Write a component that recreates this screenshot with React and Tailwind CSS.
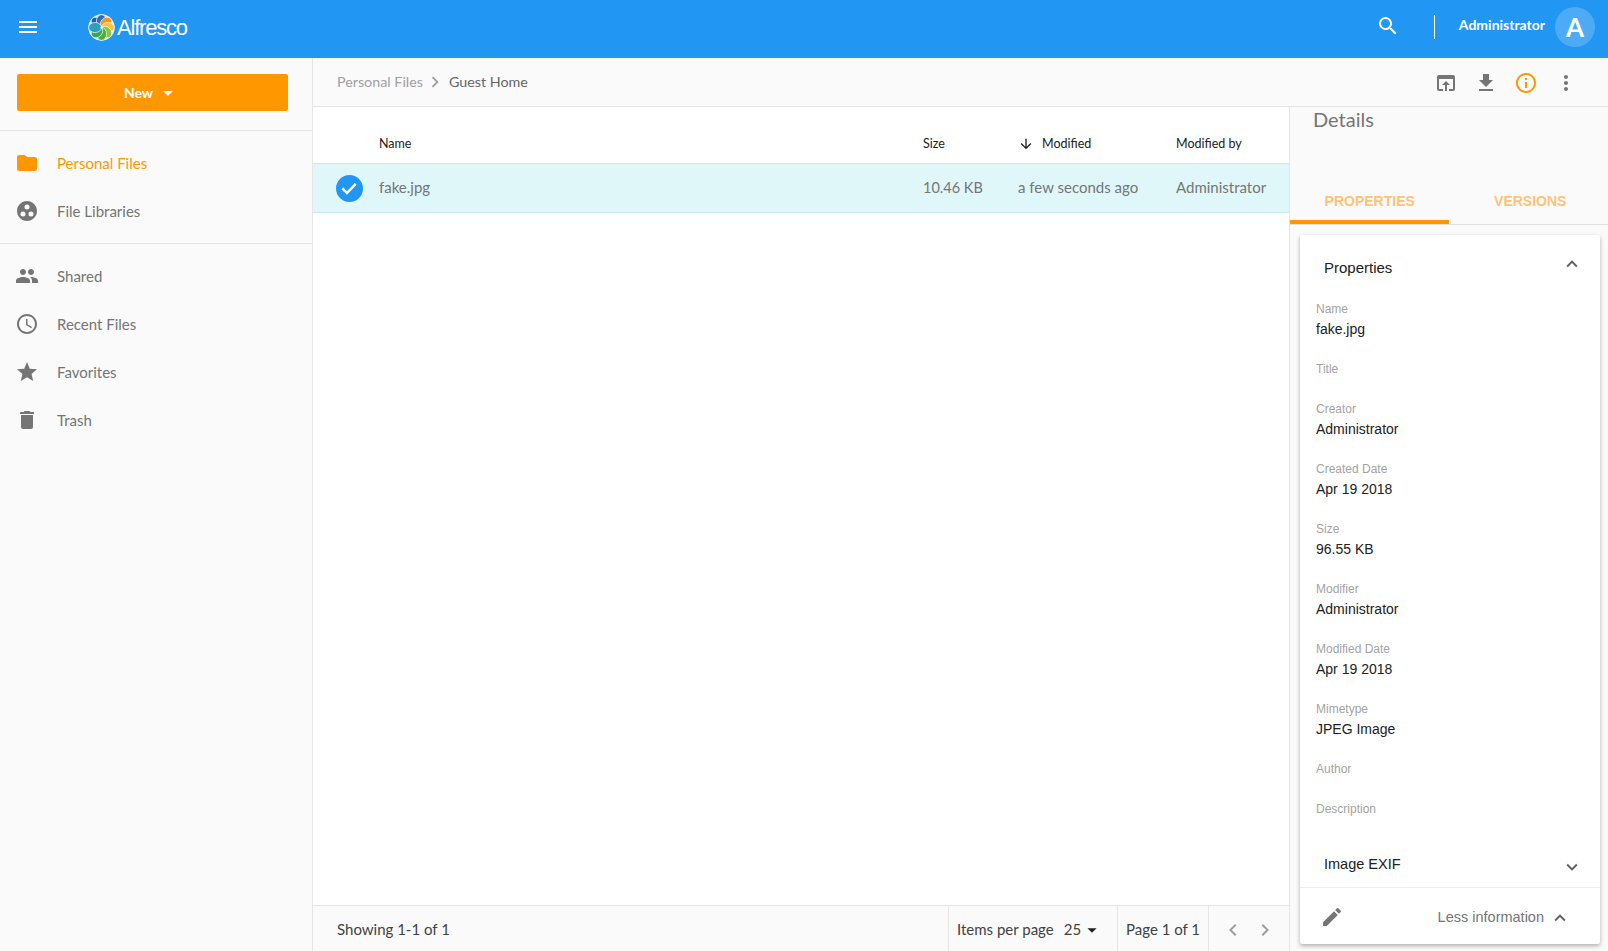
import React from "react";
import {
  MdMenu, MdSearch, MdFolder, MdGroupWork, MdPeople, MdAccessTime, MdStar, MdDelete,
  MdOpenInBrowser, MdFileDownload, MdInfoOutline, MdMoreVert, MdExpandLess, MdExpandMore,
  MdEdit, MdChevronLeft, MdChevronRight, MdArrowDropDown, MdArrowDownward,
} from "react-icons/md";

const topNav = [
  { label: "Personal Files", icon: MdFolder, active: true },
  { label: "File Libraries", icon: MdGroupWork },
];

const bottomNav = [
  { label: "Shared", icon: MdPeople },
  { label: "Recent Files", icon: MdAccessTime },
  { label: "Favorites", icon: MdStar },
  { label: "Trash", icon: MdDelete },
];

const fields = [
  { label: "Name", value: "fake.jpg" },
  { label: "Title" },
  { label: "Creator", value: "Administrator" },
  { label: "Created Date", value: "Apr 19 2018" },
  { label: "Size", value: "96.55 KB" },
  { label: "Modifier", value: "Administrator" },
  { label: "Modified Date", value: "Apr 19 2018" },
  { label: "Mimetype", value: "JPEG Image" },
  { label: "Author" },
  { label: "Description" },
];

const petals = ["#1f5fa8", "#2a6fb8", "#f7941d", "#f9c23c", "#8cc63f", "#4fae32", "#3aa655", "#2a9fc0"];

const Logo = () => (
  <svg width="27" height="27" viewBox="0 0 40 40" className="shrink-0">
    <circle cx="20" cy="20" r="19.5" fill="#ffffff" opacity="0.85" />
    {petals.map((color, i) => (
      <ellipse
        key={i}
        cx="20"
        cy="10.5"
        rx="7.5"
        ry="9.5"
        fill={color}
        stroke="#ffffff"
        strokeWidth="1"
        transform={`rotate(${i * 45 - 45} 20 20)`}
      />
    ))}
    <circle cx="20" cy="20" r="1.5" fill="#ffffff" />
  </svg>
);

const NavItem = ({ item }) => {
  const Icon = item.icon;
  return (
    <div className="flex h-12 items-center gap-[18px] pl-[15px]">
      <Icon size={24} className={item.active ? "text-[#ff9800]" : "text-[#757575]"} />
      <span className={`text-[15px] ${item.active ? "text-[#ff9800]" : "text-[#757575]"}`}>{item.label}</span>
    </div>
  );
};

const Field = ({ field }) => (
  <div className="mb-5 pl-4 font-['Liberation_Sans',sans-serif]">
    <div className="text-[12px] leading-5 text-[#a3a3a3]">{field.label}</div>
    {field.value && <div className="text-[14px] leading-5 text-[#212121]">{field.value}</div>}
  </div>
);

export default function App() {
  return (
    <div className="flex h-screen flex-col overflow-hidden bg-white font-['Lato',sans-serif]">
      {/* Header */}
      <header className="flex h-[58px] shrink-0 items-center bg-[#2196f3] pb-1 text-white">
        <MdMenu size={24} className="ml-4" />
        <div className="ml-[48px] flex items-center gap-[2px]">
          <Logo />
          <span className="font-['Liberation_Sans',sans-serif] text-[22px] tracking-[-1.2px]">Alfresco</span>
        </div>
        <MdSearch size={24} className="ml-auto mb-[2px]" />
        <div className="ml-[34px] h-6 w-px bg-white" />
        <span className="ml-6 mb-[5px] text-[14px] font-bold">Administrator</span>
        <div className="ml-[10px] mr-[13px] flex h-10 w-10 items-center justify-center rounded-full bg-[#4dabf5] text-[26px] font-bold">
          A
        </div>
      </header>

      <div className="flex min-h-0 flex-1">
        {/* Sidebar */}
        <aside className="flex w-[313px] shrink-0 flex-col border-r border-[#e5e5e5] bg-[#fafafa]">
          <div className="border-b border-[#e5e5e5] pb-[19px] pl-[17px] pt-4">
            <button className="flex h-[37px] w-[271px] items-center justify-center rounded-[2px] bg-[#ff9800] pr-[1px] text-[14px] font-bold text-white">
              New
              <MdArrowDropDown size={24} className="ml-[3px]" />
            </button>
          </div>
          <nav className="border-b border-[#e5e5e5] py-2">
            {topNav.map((item) => (
              <NavItem key={item.label} item={item} />
            ))}
          </nav>
          <nav className="py-2">
            {bottomNav.map((item) => (
              <NavItem key={item.label} item={item} />
            ))}
          </nav>
        </aside>

        <div className="flex min-w-0 flex-1 flex-col">
          {/* Breadcrumb and actions */}
          <div className="flex h-[49px] shrink-0 items-center border-b border-[#e5e5e5] bg-[#fafafa] pl-6 pr-[22px]">
            <span className="text-[14.3px] text-[#a0a0a0]">Personal Files</span>
            <MdChevronRight size={22} className="ml-[1px] mr-[3px] text-[#9e9e9e]" />
            <span className="text-[14.3px] text-[#666666]">Guest Home</span>
            <div className="ml-auto flex items-center pt-[1px] text-[#757575]">
              <span className="flex w-10 justify-center"><MdOpenInBrowser size={24} /></span>
              <span className="flex w-10 justify-center"><MdFileDownload size={24} /></span>
              <span className="flex w-10 justify-center text-[#ff9800]"><MdInfoOutline size={24} /></span>
              <span className="flex w-10 justify-center"><MdMoreVert size={24} /></span>
            </div>
          </div>

          <div className="flex min-h-0 flex-1">
            {/* File list */}
            <main className="flex min-w-0 flex-1 flex-col">
              <div className="grid h-[56px] grid-cols-[66px_544px_95px_158px_1fr] items-center pt-[18px] text-[12.5px] text-[#212121]">
                <span />
                <span>Name</span>
                <span>Size</span>
                <span className="flex items-center gap-2">
                  <MdArrowDownward size={16} />
                  Modified
                </span>
                <span>Modified by</span>
              </div>
              <div className="grid h-[50px] grid-cols-[66px_544px_95px_158px_1fr] items-center border-y border-[#c8e9ee] bg-[#e0f7fa] pb-[1px] text-[15px] text-[#757575]">
                <span className="flex justify-center pl-[6px] pt-[1px]">
                  <span className="flex h-[27px] w-[27px] items-center justify-center rounded-full bg-[#2196f3]">
                    <svg width="20" height="20" viewBox="0 0 24 24" fill="none" stroke="#ffffff" strokeWidth="3">
                      <path d="M4 12.5l5.5 5.5L20 7" />
                    </svg>
                  </span>
                </span>
                <span>fake.jpg</span>
                <span className="text-[14.5px]">10.46 KB</span>
                <span>a few seconds ago</span>
                <span>Administrator</span>
              </div>
              <div className="flex-1" />
              <footer className="flex h-[46px] shrink-0 items-stretch border-t border-[#e5e5e5] bg-[#fafafa] text-[15px] text-[#424242]">
                <div className="flex flex-1 items-center pl-6 pt-[2px]">Showing 1-1 of 1</div>
                <div className="flex w-[169px] items-center border-l border-[#e5e5e5] pl-2 pt-[2px]">
                  Items per page
                  <span className="ml-[10px]">25</span>
                  <MdArrowDropDown size={22} className="text-[#212121]" />
                </div>
                <div className="flex w-[91px] items-center border-l border-[#e5e5e5] pl-2 pt-[2px]">Page 1 of 1</div>
                <div className="flex w-[81px] items-center gap-2 border-l border-[#e5e5e5] pl-3 pt-[2px] text-[#9e9e9e]">
                  <MdChevronLeft size={24} />
                  <MdChevronRight size={24} />
                </div>
              </footer>
            </main>

            {/* Details panel */}
            <section className="w-[319px] shrink-0 border-l border-[#e5e5e5] bg-[#fafafa]">
              <div className="h-[26px] pl-[23px] text-[20px] leading-[24px] text-[#757575]">Details</div>
              <div className="mt-[43px] flex h-[49px] border-b border-[#e0e0e0] font-['Liberation_Sans',sans-serif] text-[14px] font-bold text-[#ffc27a]">
                <div className="flex w-[161px] items-center justify-center border-b-4 border-[#ff9800] pt-[6px]">PROPERTIES</div>
                <div className="flex w-40 items-center justify-center pl-[3px] pt-[2px]">VERSIONS</div>
              </div>
              <div className="ml-[10px] mt-[10px] w-[300px] rounded-[2px] bg-white shadow-[0_2px_4px_rgba(0,0,0,0.3)]">
                <div className="flex h-[64px] items-center justify-between pl-6 pr-[17px] pt-[2px] font-['Liberation_Sans',sans-serif] text-[15px] text-[#212121]">
                  Properties
                  <MdExpandLess size={22} className="mb-[8px] text-[#616161]" />
                </div>
                {fields.map((field) => (
                  <Field key={field.label} field={field} />
                ))}
                <div className="flex h-[49px] items-center justify-between border-b border-[#eeeeee] pl-6 pr-[17px] pt-[4px] font-['Liberation_Sans',sans-serif] text-[14.5px] text-[#212121]">
                  Image EXIF
                  <MdExpandMore size={22} className="mt-[4px] text-[#616161]" />
                </div>
                <div className="flex h-[56px] items-center justify-between pl-[20px] pr-[29px] pt-[2px] font-['Liberation_Sans',sans-serif] text-[14.5px] text-[#757575]">
                  <MdEdit size={24} />
                  <span className="flex items-center gap-[5px] pt-[1px]">
                    Less information
                    <MdExpandLess size={22} className="text-[#616161]" />
                  </span>
                </div>
              </div>
            </section>
          </div>
        </div>
      </div>
    </div>
  );
}
